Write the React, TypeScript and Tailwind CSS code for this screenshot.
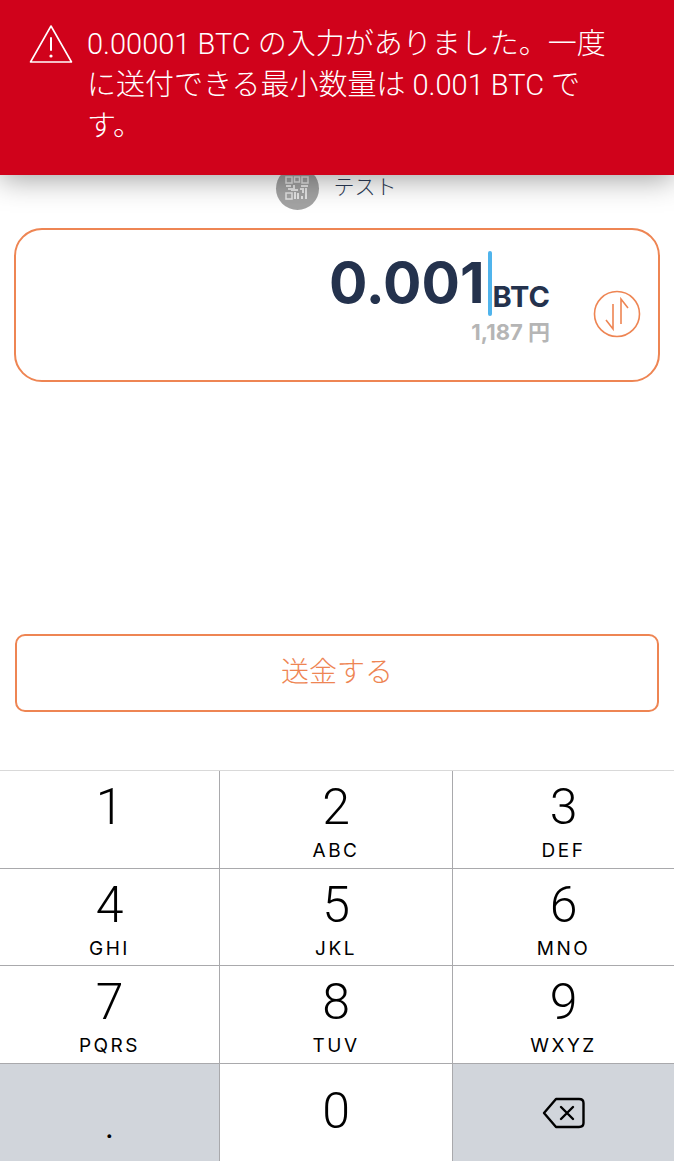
import React from "react";

const jp = "font-['Roboto','Noto_Sans_CJK_JP',sans-serif]";

function Key({ d, l, w, grey }: { d: string; l?: string; w: string; grey?: boolean }) {
  return (
    <div className={`${w} ${grey ? "bg-[#d1d5db]" : "bg-white"} flex flex-col items-center`}>
      <div className="h-[68px] pt-[5px] text-[50px] leading-[62px] text-black font-['Roboto',sans-serif] font-light">{d}</div>
      {l && <div className="text-[19px] leading-[24px] tracking-[2.5px] text-black font-['Inter',sans-serif] font-normal">{l}</div>}
    </div>
  );
}

function Row({ cells, h }: { cells: { d: string; l?: string }[]; h: string }) {
  return (
    <div className={`${h} flex border-b border-[#a9a9ac]`}>
      <Key {...cells[0]} w="w-[220px] border-r border-[#a9a9ac]" />
      <Key {...cells[1]} w="w-[233px] border-r border-[#a9a9ac]" />
      <Key {...cells[2]} w="flex-1" />
    </div>
  );
}

function Qr() {
  return (
    <svg width="24" height="24" viewBox="0 0 24 24" fill="none" stroke="#e4e4e4" strokeWidth="1.5">
      <rect x="1" y="1" width="6" height="6" />
      <rect x="9.5" y="1" width="5" height="5" />
      <rect x="17" y="1" width="6" height="6" />
      <rect x="1" y="17" width="6" height="6" />
      <path d="M1 10h5M9 9v5h4M16 10h7M3 13h5M15 13h3v4M21 12v11M10 16v7M13 17v6M17 20v3M7 14v1" strokeWidth="2" />
    </svg>
  );
}

export default function App() {
  return (
    <div className={`relative w-[674px] h-[1161px] overflow-hidden bg-white flex flex-col ${jp}`}>
      <div className="absolute top-0 left-0 right-0 h-[175px] bg-[#d0021b] shadow-[0_4px_28px_rgba(0,0,0,0.38)] z-10 flex pl-[29px] pr-[40px] pt-[24px]">
        <svg width="44" height="40" viewBox="0 0 44 40" fill="none" stroke="white" className="shrink-0 mt-[0px]">
          <path d="M22 2 L42.5 38 H1.5 Z" strokeWidth="1.6" strokeLinejoin="round" />
          <path d="M22 14v12" strokeWidth="2" strokeLinecap="round" />
          <circle cx="22" cy="32" r="1.6" fill="white" stroke="none" />
        </svg>
        <p className="ml-[14px] text-[29px] leading-[41px] font-light text-white">
          0.00001 BTC の入力がありました。一度に送付できる最小数量は 0.001 BTC です。
        </p>
      </div>

      <div className="mt-[167px] h-[42px] flex items-center justify-center gap-[15px] pr-[2px]">
        <div className="w-[43px] h-[43px] rounded-full bg-[#a3a3a3] flex items-center justify-center">
          <Qr />
        </div>
        <span className="text-[21px] font-light text-[#2b3a55]">テスト</span>
      </div>

      <div className="mt-[19px] mx-[14px] h-[154px] rounded-[28px] border-2 border-[#ee8553] flex items-start justify-end pr-[17px]">
        <div className="flex flex-col items-end mr-[43px] mt-[20px]">
          <div className="flex items-end h-[66px]">
            <span className="text-[57px] leading-[66px] font-bold text-[#24324d] font-['Inter',sans-serif]">0.001</span>
            <span className="w-[4px] h-[65px] ml-[3px] mr-[1px] rounded-full bg-[#50b4ec]" />
            <span className="text-[29px] leading-[38px] font-bold text-[#24324d] font-['Inter',sans-serif]">BTC</span>
          </div>
          <span className="mt-[1px] text-[22px] leading-[30px] font-bold text-[#b5b5b5] font-['Inter','Noto_Sans_CJK_JP',sans-serif]">1,187 円</span>
        </div>
        <svg width="48" height="48" viewBox="0 0 48 48" fill="none" stroke="#ee8553" strokeWidth="1.6" className="mt-[60px]">
          <circle cx="24" cy="24" r="22.5" />
          <path d="M20 14v25l-7-9M28 34V9l7 9" />
        </svg>
      </div>

      <div className="mt-[252px] mx-[15px] h-[78px] rounded-[10px] border-2 border-[#ee8553] flex items-center justify-center text-[28px] text-[#ee8553] font-light">
        送金する
      </div>

      <div className="mt-[58px] flex flex-col border-t border-[#d9d9d9]">
        <Row h="h-[98px]" cells={[{ d: "1" }, { d: "2", l: "ABC" }, { d: "3", l: "DEF" }]} />
        <Row h="h-[97px]" cells={[{ d: "4", l: "GHI" }, { d: "5", l: "JKL" }, { d: "6", l: "MNO" }]} />
        <Row h="h-[98px]" cells={[{ d: "7", l: "PQRS" }, { d: "8", l: "TUV" }, { d: "9", l: "WXYZ" }]} />
        <div className="h-[97px] flex">
          <div className="w-[220px] bg-[#d1d5db] border-r border-[#a9a9ac] flex justify-center pt-[42px] text-[34px] leading-[40px] text-black">.</div>
          <div className="w-[233px] bg-white border-r border-[#a9a9ac] flex justify-center pt-[16px] text-[50px] leading-[62px] text-black font-light">0</div>
          <div className="flex-1 bg-[#d1d5db] flex justify-center pt-[33px]">
            <svg width="44" height="32" viewBox="0 0 44 32" fill="none" stroke="black" strokeWidth="2.4" strokeLinejoin="round" strokeLinecap="round">
              <path d="M14 2 H37 Q41.5 2 41.5 6 V26 Q41.5 30 37 30 H14 L2 16 Z" />
              <path d="M19 10 L31 22 M31 10 L19 22" />
            </svg>
          </div>
        </div>
      </div>
    </div>
  );
}
